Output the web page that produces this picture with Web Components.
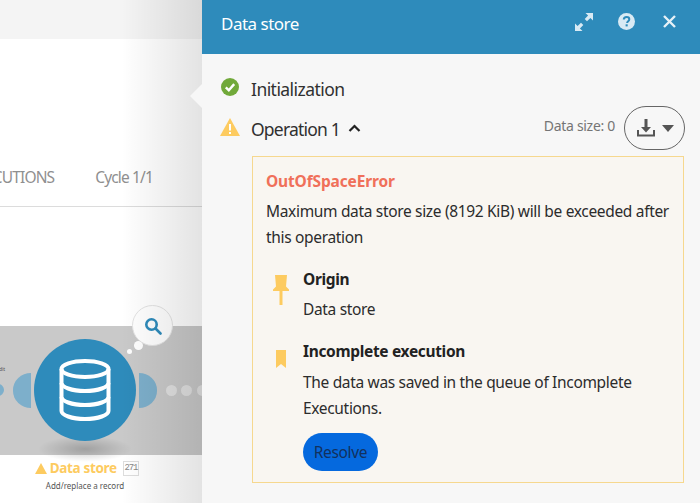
<!DOCTYPE html>
<html>
<head>
<meta charset="utf-8">
<style>
  html, body { margin: 0; height: 100%; overflow: hidden; }
  body { font-family: "Noto Sans", "Open Sans", sans-serif; color: #2c2c2c; }
</style>
</head>
<body>
<app-shell>
  <scenario-pane slot="left"></scenario-pane>
  <inspector-panel slot="right" title="Data store">
    <status-row kind="ok" label="Initialization"></status-row>
    <status-row kind="warn" label="Operation 1" expandable></status-row>
    <error-box>
      <span slot="name">OutOfSpaceError</span>
      <span slot="message">Maximum data store size (8192 KiB) will be exceeded after this operation</span>
      <detail-item icon="pin" heading="Origin">Data store</detail-item>
      <detail-item icon="bookmark" heading="Incomplete execution">
        The data was saved in the queue of Incomplete Executions.
        <pill-button slot="action">Resolve</pill-button>
      </detail-item>
    </error-box>
  </inspector-panel>
</app-shell>

<script>
const BLUE = "#2e8bbb";
const YELLOW = "#fdcb60";

class AppShell extends HTMLElement {
  constructor() {
    super();
    this.attachShadow({ mode: "open" });
    this.shadowRoot.innerHTML = /* html */`
    <style>
      :host { display: grid; grid-template-columns: 202px 498px; width: 700px; height: 503px; overflow: hidden; }
    </style>
    <slot name="left"></slot>
    <slot name="right"></slot>`;
  }
}

class ScenarioPane extends HTMLElement {
  constructor() {
    super();
    this.attachShadow({ mode: "open" });
    this.shadowRoot.innerHTML = /* html */`
    <style>
      :host { display: block; position: relative; height: 503px; background: #fff; overflow: hidden; }
      .top { height: 39px; background: #f4f4f4; }
      .tabs {
        height: 168px; box-sizing: border-box; border-bottom: 1px solid #dcdcdc;
        display: flex; align-items: flex-end; padding-bottom: 17px; gap: 41px;
        justify-content: flex-end; padding-right: 49px;
        font-size: 15.500px; letter-spacing: -0.85px; color: #8f8f8f; line-height: 24px; white-space: nowrap;
      }
      .band { position: absolute; left: 0; right: 0; top: 326px; height: 129px; background: #c9c9c9; }
      .shade { position: absolute; inset: 0; background: linear-gradient(90deg, transparent 60%, rgba(0,0,0,.11)); pointer-events: none; }
      .floor { position: absolute; left: 38px; top: 436px; width: 94px; height: 26px; border-radius: 50%; background: radial-gradient(closest-side, rgba(0,0,0,.2), transparent); }
      .node { position: absolute; left: 34px; top: 339px; width: 102px; height: 102px; border-radius: 50%; background: ${BLUE}; display: grid; place-items: center; }
      .lobe { position: absolute; background: #7dafcb; }
      .lobe.l { left: 13px; top: 373px; width: 18px; height: 35px; border-radius: 18px 0 0 18px / 17px 0 0 17px; }
      .lobe.r { left: 139px; top: 373px; width: 18px; height: 35px; border-radius: 0 18px 18px 0 / 0 17px 17px 0; }
      .lobe.d { left: -8px; top: 384px; width: 12px; height: 12px; border-radius: 50%; }
      .dot { position: absolute; top: 385px; width: 11px; height: 11px; border-radius: 50%; background: #e0e0e0; }
      .bubble { position: absolute; left: 132px; top: 305px; width: 39px; height: 39px; border-radius: 50%; background: #fff; border: 1px solid #e3e3e3; display: grid; place-items: center; }
      .puff { position: absolute; border-radius: 50%; background: #fff; }
      .label { position: absolute; left: 0; width: 170px; text-align: center; white-space: nowrap; }
      .name { top: 459px; font-size: 13.500px; letter-spacing: -0.35px; line-height: 19px; font-weight: 700; color: ${YELLOW}; display: flex; justify-content: center; align-items: center; gap: 3px; left: 2px; }
      .name em { font: 9px/13px "Liberation Mono", monospace; color: #888; border: 1px solid #ddd; letter-spacing: -1.2px; padding: 0 1px; margin-left: 3px; }
      .sub { top: 479px; font-size: 8px; line-height: 14px; color: #555; }
      .tiny { position: absolute; left: -1px; top: 365px; font-size: 5px; line-height: 8px; color: #555; }
    </style>
    <div class="top"></div>
    <div class="tabs"><span>CUTIONS</span><span>Cycle 1/1</span></div>
    <div class="band"></div>
    <div class="floor"></div>
    <div class="lobe d"></div>
    <div class="lobe l"></div>
    <div class="lobe r"></div>
    <div class="tiny">dit</div>
    <div class="node">
      <svg width="52" height="62" viewBox="0 0 52 62" fill="none" stroke="#fff" stroke-width="4">
        <ellipse cx="26" cy="10" rx="23.500" ry="8"/>
        <path d="M2.500 10v42c0 4 10 8 23.500 8s23.500-4 23.500-8V10"/>
        <path d="M2.500 24c0 4 10 8 23.500 8s23.500-4 23.500-8"/>
        <path d="M2.500 38c0 4 10 8 23.500 8s23.500-4 23.500-8"/>
      </svg>
    </div>
    <div class="dot" style="left:166px"></div>
    <div class="dot" style="left:181px"></div>
    <div class="dot" style="left:197px"></div>
    <div class="puff" style="left:127px;top:349px;width:5px;height:5px"></div>
    <div class="puff" style="left:134px;top:341px;width:9px;height:9px"></div>
    <div class="bubble">
      <svg width="18" height="18" viewBox="0 0 18 18" fill="none" stroke="${BLUE}" stroke-width="2.600">
        <circle cx="7.500" cy="7.500" r="5.200"/><path d="M11.500 11.500l5 5" stroke-linecap="round"/>
      </svg>
    </div>
    <div class="label name">
      <svg width="12" height="11" viewBox="0 0 13 12"><path d="M6.500 0L13 12H0z" fill="${YELLOW}"/></svg>
      <span>Data store</span><em>271</em>
    </div>
    <div class="label sub">Add/replace a record</div>
    <div class="shade"></div>`;
  }
}

class InspectorPanel extends HTMLElement {
  constructor() {
    super();
    this.attachShadow({ mode: "open" });
    this.shadowRoot.innerHTML = /* html */`
    <style>
      :host { display: flex; flex-direction: column; position: relative; height: 503px; background: #f7f7f7; }
      header {
        height: 54px; flex: none; background: ${BLUE}; color: #fff; box-sizing: border-box;
        display: flex; align-items: center; padding: 0 24px 8px 19px;
        font-size: 17px; letter-spacing: -0.5px;
      }
      h1 { font: inherit; margin: 0; flex: 1; }
      .tools { display: flex; align-items: center; gap: 25px; margin-top: -3px; }
      .tools svg:last-child { margin-left: 3px; }
      svg { display: block; }
      .notch { position: absolute; left: -12px; top: 84px; width: 12px; height: 24px; background: #f7f7f7; clip-path: polygon(100% 0, 0 50%, 100% 100%); }
      .body { padding: 15px 16px 0 17px; display: flex; flex-direction: column; }
    </style>
    <header>
      <h1></h1>
      <div class="tools">
        <svg width="18" height="18" viewBox="0 0 18 18" fill="#d8eaf4">
          <path d="M18 0v7.500l-2.600-2.600-3.400 3.400-2.300-2.300 3.400-3.400L10.500 0zM0 18v-7.500l2.600 2.600 3.400-3.400 2.300 2.300-3.400 3.400L7.500 18z"/>
        </svg>
        <svg width="17" height="17" viewBox="0 0 17 17">
          <circle cx="8.500" cy="8.500" r="8.500" fill="#d8eaf4"/>
          <path d="M5.800 6.600c0-1.700 1.200-2.600 2.800-2.600s2.700.9 2.700 2.300c0 1.900-2.200 1.900-2.200 3.700" fill="none" stroke="${BLUE}" stroke-width="2"/>
          <rect x="7.600" y="11.300" width="2.100" height="2.100" fill="${BLUE}"/>
        </svg>
        <svg width="13" height="13" viewBox="0 0 13 13" stroke="#e6f1f7" stroke-width="2.400"><path d="M1 1l11 11M12 1L1 12"/></svg>
      </div>
    </header>
    <div class="notch"></div>
    <div class="body"><slot></slot></div>`;
  }

  connectedCallback() {
    this.shadowRoot.querySelector("h1").textContent = this.getAttribute("title");
    this.removeAttribute("title");
  }
}

class StatusRow extends HTMLElement {
  constructor() {
    super();
    this.attachShadow({ mode: "open" });
  }

  connectedCallback() {
    const warn = this.getAttribute("kind") === "warn";
    const icon = warn
      ? `<svg width="20" height="18" viewBox="0 0 20 18"><path d="M10 0l10 18H0z" fill="${YELLOW}"/><rect x="9" y="6" width="2" height="6.500" fill="#fff"/><rect x="9" y="14" width="2" height="2" fill="#fff"/></svg>`
      : `<svg width="18" height="18" viewBox="0 0 18 18"><circle cx="9" cy="9" r="9" fill="#71a93a"/><path d="M4.800 9.300l3 3 5.400-6.200" fill="none" stroke="#fff" stroke-width="2.400"/></svg>`;
    const chevron = this.hasAttribute("expandable")
      ? `<svg class="chev" width="13" height="8" viewBox="0 0 12 8" fill="none" stroke="#222" stroke-width="2.200"><path d="M1 7l5-5 5 5"/></svg>`
      : "";
    const extra = warn
      ? `<span class="size">Data size: 0</span>
         <button>
           <svg width="20" height="20" viewBox="0 0 20 20" fill="#555"><path d="M8.500 1h3v8h3.500L10 14.500 5 9h3.500z"/><path d="M1 12h2v4.500h14V12h2v6.500H1z"/></svg>
           <svg width="12" height="7" viewBox="0 0 12 7" fill="#555"><path d="M0 0h12L6 7z"/></svg>
         </button>`
      : "";
    this.shadowRoot.innerHTML = /* html */`
    <style>
      :host { display: flex; align-items: center; height: 40px; font-size: 17.500px; letter-spacing: ${warn ? -0.8 : -0.55}px; color: #303030; }
      .icon { width: 32px; box-sizing: border-box; flex: none; display: flex; margin-top: -4px; padding-left: ${warn ? 1 : 2}px; }
      .chev { margin-left: 8px; margin-top: -2px; }
      .grow { flex: 1; }
      .size { font-size: 14px; letter-spacing: -0.3px; color: #757575; margin-right: 9px; margin-top: -7px; }
      button {
        width: 61px; height: 44px; box-sizing: border-box; border: 1px solid #666; border-radius: 22px; background: none;
        display: flex; align-items: center; justify-content: center; gap: 6px; padding: 0; margin-top: -2px; margin-right: -1px;
      }
    </style>
    <span class="icon">${icon}</span>
    <span>${this.getAttribute("label")}</span>
    ${chevron}
    <span class="grow"></span>
    ${extra}`;
  }
}

class ErrorBox extends HTMLElement {
  constructor() {
    super();
    this.attachShadow({ mode: "open" });
    this.shadowRoot.innerHTML = /* html */`
    <style>
      :host {
        display: block; box-sizing: border-box; width: 432px; height: 327px; margin: 7px 0 0 33px;
        padding: 12px 13px 0 13px; border: 1px solid #f6d88f; background: #f9f6f1; color: #2c2c2c;
        font-size: 15.500px; line-height: 26px; letter-spacing: -0.33px;
      }
      .name { font-weight: 700; letter-spacing: -0.15px; line-height: 24px; color: #f0705a; }
      .msg { margin-top: 5px; }
      .items { margin-top: 17px; display: flex; flex-direction: column; gap: 17px; }
    </style>
    <div class="name"><slot name="name"></slot></div>
    <div class="msg"><slot name="message"></slot></div>
    <div class="items"><slot></slot></div>`;
  }
}

class DetailItem extends HTMLElement {
  constructor() {
    super();
    this.attachShadow({ mode: "open" });
  }

  connectedCallback() {
    const pin = `<svg width="16" height="30" viewBox="0 0 16 30" fill="${YELLOW}"><path d="M2 0h12l-1 11.500 3 3V16H0v-1.500l3-3z"/><rect x="6.500" y="16" width="3" height="14"/></svg>`;
    const bookmark = `<svg width="10" height="18" viewBox="0 0 10 18" fill="${YELLOW}"><path d="M0 0h10v18l-5-4-5 4z"/></svg>`;
    this.shadowRoot.innerHTML = /* html */`
    <style>
      :host { display: grid; grid-template-columns: 37px 1fr; }
      .icon { padding: 8px 0 0 7px; }
      .icon.bookmark { padding: 10px 0 0 10px; }
      h2 { margin: 0 0 5px; font-size: inherit; line-height: 24px; font-weight: 700; color: #222; }
      .bookmark + div h2 { margin-bottom: 6px; }
      ::slotted([slot="action"]) { margin-top: 12px; }
    </style>
    <div class="icon ${this.getAttribute("icon")}">${this.getAttribute("icon") === "pin" ? pin : bookmark}</div>
    <div>
      <h2>${this.getAttribute("heading")}</h2>
      <slot></slot>
      <slot name="action"></slot>
    </div>`;
  }
}

class PillButton extends HTMLElement {
  constructor() {
    super();
    this.attachShadow({ mode: "open" });
    this.shadowRoot.innerHTML = /* html */`
    <style>
      :host {
        display: flex; align-items: center; justify-content: center; width: 75px; height: 38px; border-radius: 19px;
        background: #0569de; color: #12315e; font-size: inherit; line-height: 20px;
      }
    </style>
    <slot></slot>`;
  }
}

customElements.define("app-shell", AppShell);
customElements.define("scenario-pane", ScenarioPane);
customElements.define("inspector-panel", InspectorPanel);
customElements.define("status-row", StatusRow);
customElements.define("error-box", ErrorBox);
customElements.define("detail-item", DetailItem);
customElements.define("pill-button", PillButton);
</script>
</body>
</html>
